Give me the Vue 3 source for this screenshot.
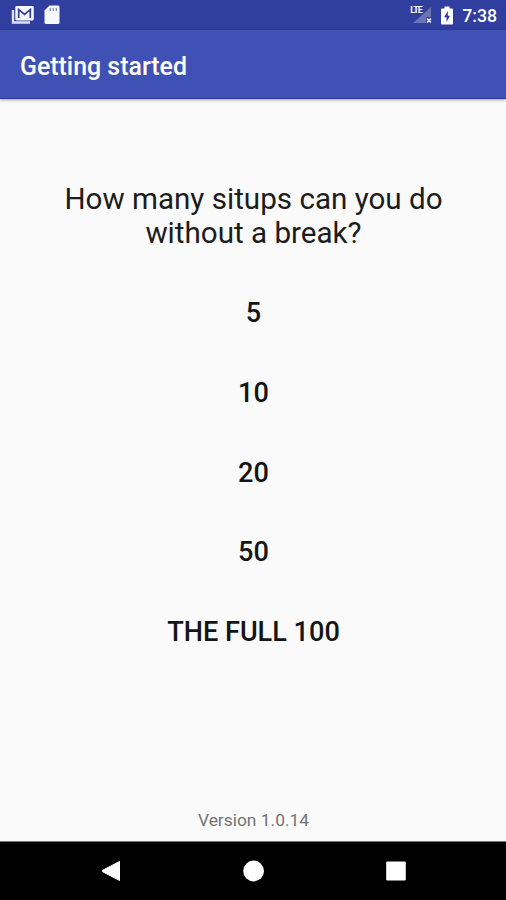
<template>
  <div class="screen">
    <!-- System status bar -->
    <div class="status-bar">
      <div class="status-left">
        <svg class="icon-mail" width="24" height="20" viewBox="0 0 24 20">
          <path d="M2 5v12.5h17" fill="none" stroke="#dfe2f5" stroke-width="2.4" />
          <rect x="4.3" y="1" width="18.5" height="14.5" rx="1.4" fill="#f5f6ff" />
          <path d="M7.7 13V4.5l5.8 5 5.8-5V13" fill="none" stroke="#303f9f" stroke-width="1.7" />
        </svg>
        <svg class="icon-sd" width="16" height="20" viewBox="0 0 16 20">
          <path d="M5.5 0.5H14q1.5 0 1.5 1.5v15.5q0 1.5-1.5 1.5H2Q0.5 19 0.5 17.5V5.5z" fill="#f8f9ff" />
          <path d="M6.3 3v3M9.3 3v3M12.3 3v3" stroke="#7d87c5" stroke-width="1.3" />
        </svg>
      </div>
      <div class="status-right">
        <div class="signal">
          <svg width="24" height="20" viewBox="0 0 24 20">
            <path d="M22 2v10h-5v6H4z" fill="#6873bb" />
            <path d="M18 13.5l4 4M22 13.5l-4 4" stroke="#f5f6ff" stroke-width="1.6" />
          </svg>
          <span class="lte">LTE</span>
        </div>
        <svg class="icon-battery" width="12" height="19" viewBox="0 0 12 19">
          <path d="M3.5 0.5h5v2H11q1 0 1 1v14q0 1-1 1H1q-1 0-1-1v-14q0-1 1-1h2.5z" fill="#fff" />
          <path d="M6.8 5L3 11.3h2.5V16L9 9.7H6.8z" fill="#303f9f" />
        </svg>
        <span class="clock">7:38</span>
      </div>
    </div>

    <header class="toolbar">
      <h1>Getting started</h1>
    </header>

    <main class="content">
      <p class="question">How many situps can you do<br />without a break?</p>
      <div class="options">
        <button v-for="option in options" :key="option" class="option">{{ option }}</button>
      </div>
      <p class="version">Version 1.0.14</p>
    </main>

    <!-- System navigation: back, home, recents -->
    <nav class="nav-bar">
      <svg width="22" height="22" viewBox="0 0 22 22">
        <path d="M18.5 1.5v19L1.8 11.8q-1-.8 0-1.6z" fill="#fff" stroke="#fff" stroke-width="1" stroke-linejoin="round" />
      </svg>
      <svg width="22" height="22" viewBox="0 0 22 22">
        <circle cx="10.6" cy="11" r="10.4" fill="#fff" />
      </svg>
      <svg width="22" height="22" viewBox="0 0 22 22">
        <rect x="1.2" y="1.5" width="19.6" height="19" rx="1.3" fill="#fff" />
      </svg>
    </nav>
  </div>
</template>

<script setup>
const options = ['5', '10', '20', '50', 'THE FULL 100']
</script>

<style>
body {
  margin: 0;
}
</style>

<style scoped>
.screen {
  display: flex;
  flex-direction: column;
  width: 506px;
  height: 900px;
  overflow: hidden;
  background-color: #fafafa;
  font-family: Roboto, sans-serif;
}

.status-bar {
  display: flex;
  justify-content: space-between;
  height: 30px;
  padding: 0 9px 0 11px;
  box-sizing: border-box;
  background-color: #303f9f;
}

.status-left,
.status-right {
  display: flex;
  align-items: center;
}

.icon-sd {
  margin-left: 9px;
}

.signal {
  position: relative;
  width: 24px;
  height: 20px;
  margin-right: 8px;
}

/* Network label sits over the signal triangle */
.lte {
  position: absolute;
  top: 1px;
  left: 1px;
  color: #fff;
  font-size: 9px;
  font-weight: 700;
  line-height: 9px;
  letter-spacing: -0.9px;
}

.clock {
  margin-left: 9px;
  padding-top: 2px;
  color: #fff;
  font-size: 17.7px;
  font-weight: 500;
  line-height: 30px;
}

.toolbar {
  display: flex;
  align-items: center;
  flex-shrink: 0;
  height: 69px;
  padding: 5px 20px 0;
  box-sizing: border-box;
  border-bottom: 1px solid #283a94;
  background-color: #3f51b5;
  box-shadow: 0 1px 3px rgba(0, 0, 0, 0.35);
}

.toolbar h1 {
  margin: 0;
  color: #fff;
  font-size: 24.9px;
  font-weight: 500;
}

.content {
  display: flex;
  flex: 1;
  flex-direction: column;
  align-items: center;
  padding: 83px 0 0 1px;
}

.question {
  margin: 0;
  color: #1c1c1c;
  font-size: 29.6px;
  line-height: 34px;
  text-align: center;
}

.options {
  display: flex;
  flex-direction: column;
  align-items: center;
  margin-top: 23.3px;
}

.option {
  height: 79.7px;
  padding: 0;
  border: none;
  background: none;
  color: #151515;
  font-family: inherit;
  font-size: 27.1px;
  font-weight: 500;
}

.version {
  margin: auto 0 10px;
  color: #737373;
  font-size: 17.4px;
  line-height: 22px;
}

.nav-bar {
  display: flex;
  align-items: center;
  justify-content: space-between;
  height: 59px;
  padding: 0 99px 0 101px;
  box-sizing: border-box;
  border-top: 1px solid #777;
  background-color: #000;
}
</style>
